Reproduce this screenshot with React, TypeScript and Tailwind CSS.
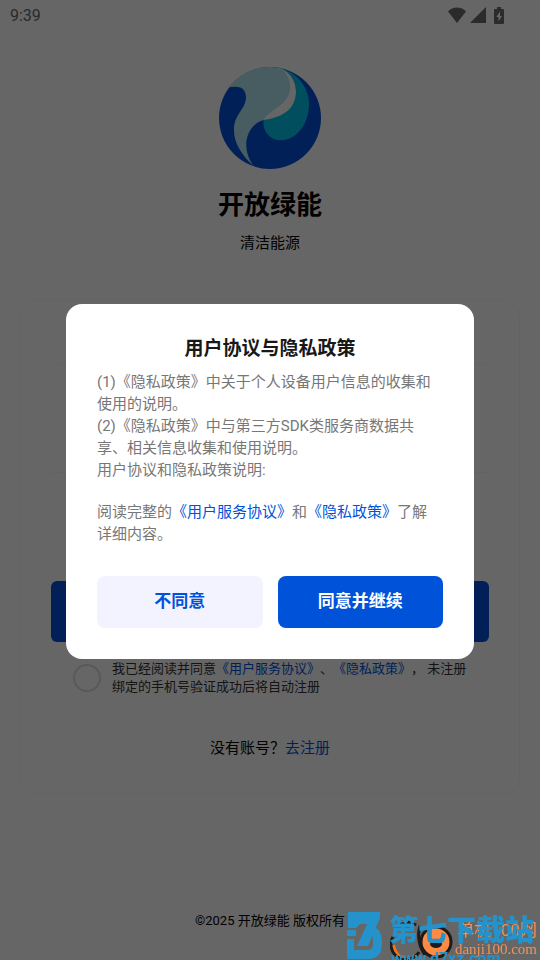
function StatusBar() {
  return (
    <header className="flex h-[30px] items-center justify-between pl-2.5 pr-9 text-[#6b6b6b]">
      <span className="pt-0.5 text-base">9:39</span>
      <div className="flex items-center gap-1">
        <svg className="h-4 w-[18px]" viewBox="0 0 18 16" fill="currentColor">
          <path d="M9 16 0 4.6C2.400 2 5.400.5 9 .5s6.600 1.500 9 4.100z" />
        </svg>
        <svg className="h-4 w-4" viewBox="0 0 16 16" fill="currentColor">
          <path d="M16 0v16H0z" />
        </svg>
        <svg className="ml-1 h-[17px] w-2.5" viewBox="0 0 10 17">
          <path fill="currentColor" d="M3 0h4v2h2.200l.8.800V16.200l-.8.800H.8l-.8-.8V2.800L.8 2H3z" />
          <path fill="#fff" d="M6 4.500 2.300 10h2.200v4.500L7.900 9H6z" />
        </svg>
      </div>
    </header>
  );
}

function Logo() {
  return (
    <svg className="size-[102px]" viewBox="45 36 306 306">
      <circle cx="198" cy="189" r="153" fill="#0052d9" />
      <path
        fill="#00c4ea"
        d="M226 38C285 52 318 105 315 152C312 212 276 256 226 256C194 252 176 228 178 195C235 186 274 158 276 112C276 76 256 50 226 38Z"
      />
      <path
        fill="#fff"
        d="M232 40C262 56 276 82 276 112C274 160 240 188 178 195C180 160 240 100 232 40Z"
      />
      <path
        fill="#b4e8f6"
        d="M75 97A153 153 0 0 1 232 40C252 58 261 82 258 104C252 152 200 160 178 195C145 204 124 240 127 275C129 300 138 318 150 334C112 300 88 262 90 220C92 176 126 162 126 126C125 106 114 96 100 96C90 95 82 96 75 97Z"
      />
    </svg>
  );
}

function LoginCard() {
  return (
    <form className="mx-5 mt-[47px] rounded-2xl border border-[#f8f8f8] px-[30px] pb-[34px]">
      <input
        type="tel"
        aria-label="手机号"
        className="mt-2 block h-14 w-full border-b border-[#f8f8f8] outline-none"
      />
      <input
        type="password"
        aria-label="密码"
        className="mt-[52px] block h-14 w-full border-b border-[#f8f8f8] outline-none"
      />
      <button
        type="button"
        aria-label="登录"
        className="mt-[108px] block h-[61px] w-full rounded-md bg-[#0052d9]"
      />

      <div className="mt-[18px] flex items-center gap-[11px] pl-[22px] pr-4">
        <input
          id="agree"
          type="checkbox"
          className="size-7 shrink-0 appearance-none rounded-full border-2 border-[#dfdfdf]"
        />
        <label htmlFor="agree" className="text-[13px] leading-[18px] text-[#333]">
          我已经阅读并同意
          <a href="#service" className="text-[#0052d9]">《用户服务协议》</a>、
          <a href="#privacy" className="text-[#0052d9]">《隐私政策》</a>
          ， 未注册绑定的手机号验证成功后将自动注册
        </label>
      </div>

      <div className="mt-5 flex justify-center border-t border-[#fafafa] pt-5 text-[15px] leading-[22px]">
        <span>没有账号？</span>
        <a href="#register" className="text-[#0052d9]">去注册</a>
      </div>
    </form>
  );
}

function PolicyDialog() {
  return (
    <div className="fixed inset-0 flex items-center justify-center bg-black/60 px-[66px] pt-0.5">
      <div
        role="dialog"
        aria-labelledby="policy-title"
        className="w-full rounded-2xl bg-white px-[31px] py-[31px]"
      >
        <h2 id="policy-title" className="text-center text-[19px] font-bold leading-7 text-[#181818]">
          用户协议与隐私政策
        </h2>
        <div className="mt-2 pr-2 text-[15px] leading-[22px] text-[#777]">
          <p>(1)《隐私政策》中关于个人设备用户信息的收集和使用的说明。</p>
          <p>(2)《隐私政策》中与第三方SDK类服务商数据共享、相关信息收集和使用说明。</p>
          <p>用户协议和隐私政策说明:</p>
          <p className="mt-5">
            阅读完整的
            <a href="#service" className="text-[#0052d9]">《用户服务协议》</a>和
            <a href="#privacy" className="text-[#0052d9]">《隐私政策》</a>
            了解详细内容。
          </p>
        </div>
        <div className="mt-[31px] grid grid-cols-2 gap-[15px] text-[17px] font-bold">
          <button type="button" className="h-[52px] rounded-lg bg-[#f2f3ff] text-[#0052d9]">
            不同意
          </button>
          <button type="button" className="h-[52px] rounded-lg bg-[#0052d9] text-white">
            同意并继续
          </button>
        </div>
      </div>
    </div>
  );
}

function Watermark() {
  return (
    <div className="pointer-events-none fixed bottom-0 right-0 h-12 w-[194px] overflow-hidden">
      <svg className="absolute left-[44px] top-0 h-12 w-[66px]" viewBox="0 0 66 48" fill="none">
        <path d="M3 33a19 19 0 0 0 22 16" stroke="#f97316" strokeWidth="4" />
        <path d="M10 13a15 15 0 0 1 16 0M3 25a15 15 0 0 0 26 15" stroke="#1c1c1c" strokeWidth="3" />
        <circle cx="46" cy="30" r="15" fill="#ff8a45" stroke="#1c1c1c" strokeWidth="3" />
        <ellipse cx="46" cy="32" rx="6" ry="4" fill="#1c1c1c" />
        <path d="M30 14c-3 10-1 22 6 30" stroke="#1c1c1c" strokeWidth="3" />
      </svg>
      <div className="absolute right-[3px] top-2 text-right text-[#f0935a]">
        <p className="text-[17px] leading-[21px]">单机100网</p>
        <p className="font-['Liberation_Serif'] text-[15px] leading-4">danji100.com</p>
      </div>
      {/* the D and the 7 share one silhouette */}
      <svg className="absolute left-0 top-0 h-12 w-9" viewBox="0 0 36 48" fill="#2492cb">
        <path d="M2 0h32v6L22 34H11L21 12h-7l-4 4H2z" />
        <path d="M25 14c7 1 11 7 11 16v2c0 10-5 15-14 15H1l6-9h13c5 0 7-2 7-6v-3c0-4-1-6-4-7z" />
        <path d="M1 18h9v6H1zM1 27h7v12l-7 8z" />
      </svg>
      <p className="absolute left-[43px] top-[3px] whitespace-nowrap text-[29px] font-black leading-8 text-[#2492cb]">
        第七下载站
      </p>
      <p className="absolute left-[45px] top-[37px] whitespace-nowrap text-base font-bold leading-5 text-[#2492cb]">
        www.d7xz.com
      </p>
    </div>
  );
}

export default function App() {
  return (
    <div className="flex min-h-screen flex-col bg-white font-[Roboto,'Noto_Sans_CJK_SC',sans-serif] text-black [text-spacing-trim:space-all]">
      <StatusBar />
      <main className="flex flex-col">
        <div className="flex flex-col items-center pt-[37px]">
          <Logo />
          <h1 className="mt-5 text-[26px] font-bold leading-8">开放绿能</h1>
          <p className="mt-3 text-[15px] leading-5">清洁能源</p>
        </div>
        <LoginCard />
      </main>
      <footer className="mt-auto pb-[29px] text-center text-[13px] leading-5">
        ©2025 开放绿能 版权所有
      </footer>
      <PolicyDialog />
      <Watermark />
    </div>
  );
}
